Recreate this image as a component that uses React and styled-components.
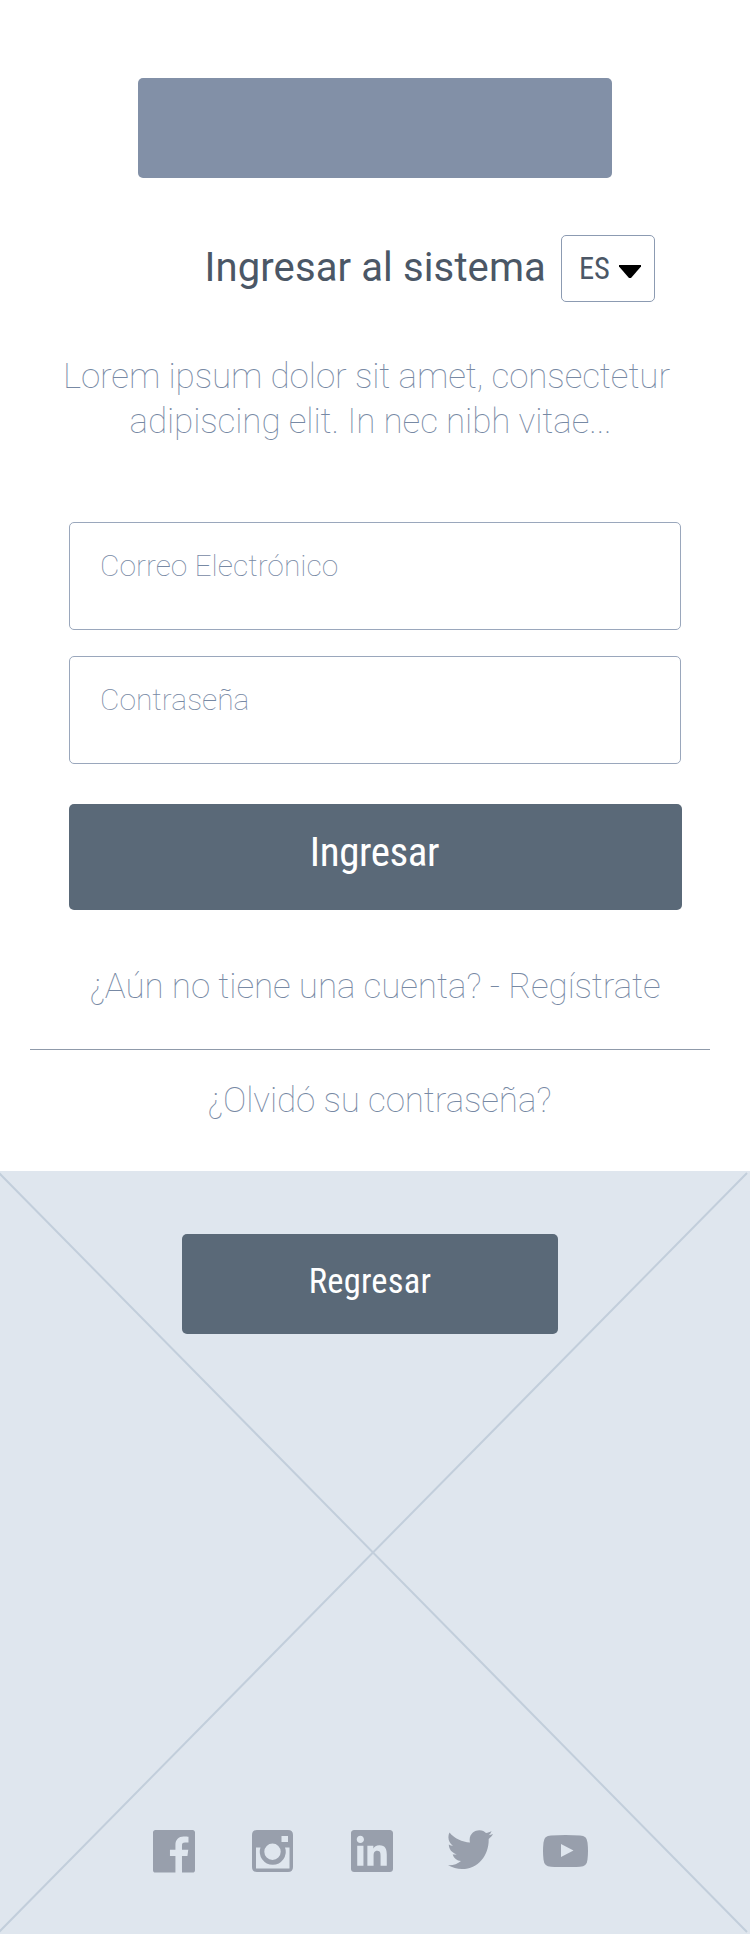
import React from "react";
import styled, { createGlobalStyle } from "styled-components";

const Global = createGlobalStyle`
  * { box-sizing: border-box; }
  body { margin: 0; background: #fff; font-family: Roboto, "Liberation Sans", sans-serif; }
`;

const Page = styled.main`
  width: 750px;
  height: 1934px;
  display: flex;
  flex-direction: column;
  overflow: hidden;
`;

const Access = styled.section`
  height: 1171px;
  padding-top: 78px;
  display: flex;
  flex-direction: column;
`;

const Logo = styled.div`
  width: 474px;
  height: 100px;
  margin: 0 auto;
  border-radius: 5px;
  background: #8290a7;
`;

const Heading = styled.header`
  display: flex;
  align-items: center;
  justify-content: flex-end;
  gap: 15px;
  height: 67px;
  margin-top: 57px;
  padding-right: 95px;
`;

const Title = styled.h1`
  margin: 0;
  padding-bottom: 1px;
  font-size: 40px;
  line-height: 48px;
  font-weight: 400;
  letter-spacing: 0.12px;
  color: #4b5766;
  white-space: nowrap;
`;

const Language = styled.button`
  display: flex;
  align-items: center;
  width: 94px;
  height: 67px;
  padding: 0 0 0 17px;
  border: 1px solid #8c9bb2;
  border-radius: 5px;
  background: #fff;
  color: #4b5766;
  font: 400 30.5px/36px Roboto, "Liberation Sans", sans-serif;
  gap: 9px;
`;

const Arrow = styled.svg`
  display: block;
  flex: none;
  margin-top: 6px;
`;

const Line = styled.span`
  display: inline-block;
  white-space: nowrap;
  font-stretch: ${(p) => p.$stretch || "100%"};
  letter-spacing: ${(p) => p.$track || 0}px;
  padding-left: ${(p) => p.$indent || 0}px;
`;

const Intro = styled.p`
  margin: 52px 0 0;
  padding-right: 17px;
  display: flex;
  flex-direction: column;
  align-items: center;
  font-size: 35px;
  line-height: 45px;
  font-weight: 100;
  color: #7789a4;
`;

const Form = styled.form`
  margin: 78px 0 0 69px;
  width: 613px;
`;

const Field = styled.div`
  width: 612px;
  height: 108px;
  margin-bottom: 26px;
  padding: 25px 0 0 30px;
  border: 1px solid #9aa7bc;
  border-radius: 5px;
  font-size: 30px;
  line-height: 36px;
  font-weight: 100;
  color: #7789a4;
`;

const Button = styled.button`
  display: block;
  width: ${(p) => p.$width}px;
  height: ${(p) => p.$height}px;
  margin: ${(p) => p.$margin};
  padding: 0 ${(p) => p.$inset || 0}px ${(p) => p.$lift}px 0;
  border: 0;
  border-radius: 5px;
  background: #5a6978;
  color: #fff;
  font: 400 ${(p) => p.$size}px/48px Roboto, "Liberation Sans", sans-serif;
`;

const Link = styled.a`
  display: flex;
  justify-content: center;
  margin-top: ${(p) => p.$top}px;
  padding-left: ${(p) => p.$shift}px;
  font-size: 35px;
  line-height: 44px;
  font-weight: 100;
  color: #7789a4;
`;

const Divider = styled.hr`
  width: 680px;
  height: 1px;
  margin: 40px 0 0 30px;
  border: 0;
  background: #8f9aaa;
  flex: none;
`;

const Footer = styled.footer`
  position: relative;
  height: 763px;
  padding-top: 63px;
  background: #dfe6ee;
`;

const Cross = styled.svg`
  position: absolute;
  inset: 0;
`;

const Content = styled.div`
  position: relative;
`;

const Social = styled.nav`
  display: flex;
  align-items: flex-start;
  margin: 496px 0 0 153px;
`;

const Icon = styled.svg`
  display: block;
  width: ${(p) => p.$w}px;
  height: ${(p) => p.$h}px;
  margin: ${(p) => p.$top || 0}px ${(p) => p.$gap || 0}px 0 0;
  fill: #989fac;
`;

export default function App() {
  return (
    <Page>
      <Global />
      <Access>
        <Logo />
        <Heading>
          <Title>Ingresar al sistema</Title>
          <Language type="button">
            <Line $stretch="75%" $track={-0.2}>ES</Line>
            <Arrow width="22" height="13" viewBox="0 0 22 13"><path d="M0 0H22V1.500L12 13H10L0 1.500Z" /></Arrow>
          </Language>
        </Heading>
        <Intro>
          <Line $track={-0.1}>Lorem ipsum dolor sit amet, consectetur</Line>
          <Line $track={-0.1} $indent={8}>adipiscing elit. In nec nibh vitae...</Line>
        </Intro>
        <Form>
          <Field><Line>Correo Electrónico</Line></Field>
          <Field><Line>Contraseña</Line></Field>
          <Button type="button" $width={613} $height={106} $margin="40px 0 0" $lift={10} $inset={2} $size={41}>
            <Line $stretch="75%" $track={-0.4}>Ingresar</Line>
          </Button>
        </Form>
        <Link $top={55} $shift={0}><Line $track={-0.1}>¿Aún no tiene una cuenta? - Regístrate</Line></Link>
        <Divider />
        <Link $top={29} $shift={9}><Line $track={-0.12}>¿Olvidó su contraseña?</Line></Link>
      </Access>
      <Footer>
        <Cross width="750" height="763" viewBox="0 0 750 763" fill="none" stroke="#c2cedb" strokeWidth="2">
          <path d="M-1 2L747 761M747 2L-1 761" />
        </Cross>
        <Content>
          <Button type="button" $width={376} $height={100} $margin="0 0 0 182px" $lift={6} $size={34.5}>
            <Line $stretch="75%" $track={0.25}>Regresar</Line>
          </Button>
          <Social>
            <Icon $w={42} $h={42.5} $gap={57} viewBox="0 0 24 24" preserveAspectRatio="none">
              <path d="M22.676 0H1.324C.593 0 0 .593 0 1.324v21.352C0 23.408.593 24 1.324 24h11.494v-9.294H9.689v-3.621h3.129V8.41c0-3.099 1.894-4.785 4.659-4.785 1.325 0 2.464.097 2.796.141v3.24h-1.921c-1.5 0-1.792.721-1.792 1.771v2.311h3.584l-.465 3.63H16.56V24h6.115c.733 0 1.325-.592 1.325-1.324V1.324C24 .593 23.408 0 22.676 0" />
            </Icon>
            <Icon $w={41} $h={42} $gap={58} viewBox="0 0 41 42">
              <path fillRule="evenodd" d="M5 0H36Q41 0 41 5V37Q41 42 36 42H5Q0 42 0 37V5Q0 0 5 0ZM29.5 6V12H36V6ZM4 17.5V38.5H37.5V17.5H33A13 13 0 1 1 8.500 17.500ZM20.500 13.500A8.200 8.200 0 1 0 20.500 29.900A8.200 8.200 0 1 0 20.500 13.500Z" />
            </Icon>
            <Icon $w={42} $h={42} $gap={54.5} viewBox="0 0 24 24">
              <path d="M20.447 20.452h-3.554v-5.569c0-1.328-.027-3.037-1.852-3.037-1.853 0-2.136 1.445-2.136 2.939v5.667H9.351V9h3.414v1.561h.046c.477-.9 1.637-1.85 3.37-1.85 3.601 0 4.267 2.37 4.267 5.455v6.286zM5.337 7.433c-1.144 0-2.063-.926-2.063-2.065 0-1.138.92-2.063 2.063-2.063 1.14 0 2.064.925 2.064 2.063 0 1.139-.925 2.065-2.064 2.065zm1.782 13.019H3.555V9h3.564v11.452zM22.225 0H1.771C.792 0 0 .774 0 1.729v20.542C0 23.227.792 24 1.771 24h20.451C23.2 24 24 23.227 24 22.271V1.729C24 .774 23.2 0 22.222 0h.003z" />
            </Icon>
            <Icon $w={45} $h={39} $gap={50.5} viewBox="0 0 45 39">
              <path d="M1.500 2.500C6.500 8.500 14 12 22 12.500C20 4 27 0 31.500 .2C34.500 .2 36.500 1.500 38 3C40 2.700 42 2 43.500 1C43 3 42 4.200 40.500 5.200C42 5 43.500 4.600 45 4C43.800 6 42.500 7.500 40.700 9C41 25 30.500 39 14 39C9 39 4.500 37.500 0 35.200C5 35.500 9.500 34 13 31C9 30.800 5.700 28.300 4.700 24.300C6 24.600 7.500 24.500 8.700 24.200C4 23 .8 19.300 .8 14.500C2 15.300 3.500 15.700 4.900 15.700C.8 13 -.9 7.500 1.500 2.500Z" />
            </Icon>
            <Icon $w={45} $h={32} $top={5} viewBox="0 0 45 32">
              <path fillRule="evenodd" d="M8 .5Q22.500-.5 37 .5Q44 .5 44.500 7.500Q45.500 16 44.500 24.500Q44 31.500 37 31.700Q22.500 32.500 8 31.700Q1 31.500 .5 24.500Q-.5 16 .5 7.500Q1 .5 8 .5ZM18 9V22L30.500 15.500Z" />
            </Icon>
          </Social>
        </Content>
      </Footer>
    </Page>
  );
}
